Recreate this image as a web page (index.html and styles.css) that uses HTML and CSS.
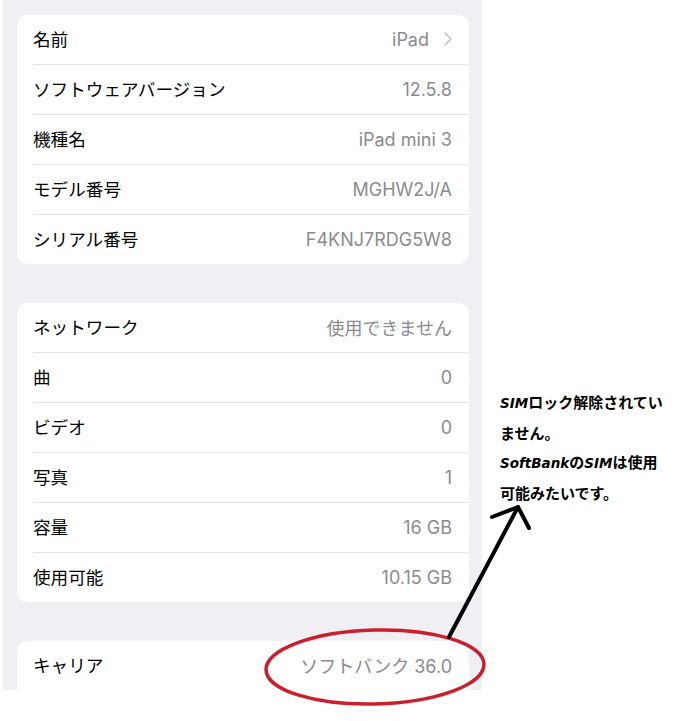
FILE: index.html
```html
<!DOCTYPE html>
<html lang="ja">
<head>
<meta charset="utf-8">
<title>情報</title>
<link rel="stylesheet" href="styles.css">
</head>
<body>
<div class="page">
  <div class="panel">
    <div class="card">
      <div class="row"><span class="label">名前</span><span class="value">iPad<svg class="chev" width="8" height="14" viewBox="0 0 8 14"><path d="M1.2 1.2 L6.8 7 L1.2 12.8" fill="none" stroke="#c4c4c8" stroke-width="1.7" stroke-linecap="round" stroke-linejoin="round"/></svg></span></div>
      <div class="row"><span class="label">ソフトウェアバージョン</span><span class="value">12.5.8</span></div>
      <div class="row"><span class="label">機種名</span><span class="value">iPad mini 3</span></div>
      <div class="row"><span class="label">モデル番号</span><span class="value">MGHW2J/A</span></div>
      <div class="row"><span class="label">シリアル番号</span><span class="value">F4KNJ7RDG5W8</span></div>
    </div>
    <div class="card">
      <div class="row"><span class="label">ネットワーク</span><span class="value">使用できません</span></div>
      <div class="row"><span class="label">曲</span><span class="value">0</span></div>
      <div class="row"><span class="label">ビデオ</span><span class="value">0</span></div>
      <div class="row"><span class="label">写真</span><span class="value">1</span></div>
      <div class="row"><span class="label">容量</span><span class="value">16 GB</span></div>
      <div class="row"><span class="label">使用可能</span><span class="value">10.15 GB</span></div>
    </div>
    <div class="card card-cut">
      <div class="row"><span class="label">キャリア</span><span class="value">ソフトバンク 36.0</span></div>
    </div>
  </div>
  <div class="note">
    <p><span class="lat">SIM</span>ロック解除されてい<br>ません。</p>
    <p><span class="lat">SoftBank</span>の<span class="lat">SIM</span>は使用<br>可能みたいです。</p>
  </div>
</div>
<svg class="markup" width="675" height="721" viewBox="0 0 675 721">
  <ellipse cx="375" cy="667" rx="109" ry="37" fill="none" stroke="#cc1f2d" stroke-width="3.5" transform="rotate(-1.5 375 667)"/>
  <path d="M449 637 L518 507" fill="none" stroke="#000" stroke-width="4" stroke-linecap="round"/>
  <path d="M492 517 L518 507 L529 528" fill="none" stroke="#000" stroke-width="4" stroke-linecap="round" stroke-linejoin="round"/>
</svg>
</body>
</html>
```
FILE: styles.css
```css
html, body {
  margin: 0;
  padding: 0;
  background: #ffffff;
}
body {
  font-family: Inter, "Noto Sans CJK JP", sans-serif;
  width: 675px;
  height: 721px;
  overflow: hidden;
  position: relative;
}
.page {
  display: flex;
  align-items: flex-start;
}
.panel {
  margin-left: 3px;
  width: 479px;
  height: 690px;
  overflow: hidden;
  background: #efeff4;
  padding: 15px 13px 0 14px;
  box-sizing: border-box;
  display: flex;
  flex-direction: column;
  gap: 39px;
  flex-shrink: 0;
}
.card {
  background: #ffffff;
  border-radius: 10px;
  flex-shrink: 0;
}
.card-cut {
  border-radius: 10px 10px 0 0;
}
.row {
  height: 49px;
  margin-left: 16px;
  padding-right: 17px;
  display: flex;
  align-items: center;
  justify-content: space-between;
  border-bottom: 1px solid #e2e2e7;
}
.card .row:last-child {
  border-bottom: none;
}
.card-cut .row:last-child {
  border-bottom: 1px solid #e2e2e7;
}
.label {
  color: #000000;
  font-family: "Noto Sans CJK JP", sans-serif;
  font-size: 17.6px;
  margin-top: -2px;
}
.value {
  color: #8a8a8f;
  font-size: 18px;
  display: flex;
  align-items: center;
  gap: 15px;
  margin-top: -1px;
}
.chev {
  display: block;
}
.note {
  margin-left: 18px;
  padding-top: 387px;
  font-family: "Noto Sans CJK JP", sans-serif;
  font-weight: 700;
  font-size: 15px;
  line-height: 29px;
  color: #000;
}
.note p {
  margin: 0;
}
.lat {
  font-family: "DejaVu Sans", sans-serif;
  font-style: italic;
  font-weight: 700;
  font-size: 13.5px;
}
.markup {
  position: absolute;
  left: 0;
  top: 0;
  pointer-events: none;
}
```
